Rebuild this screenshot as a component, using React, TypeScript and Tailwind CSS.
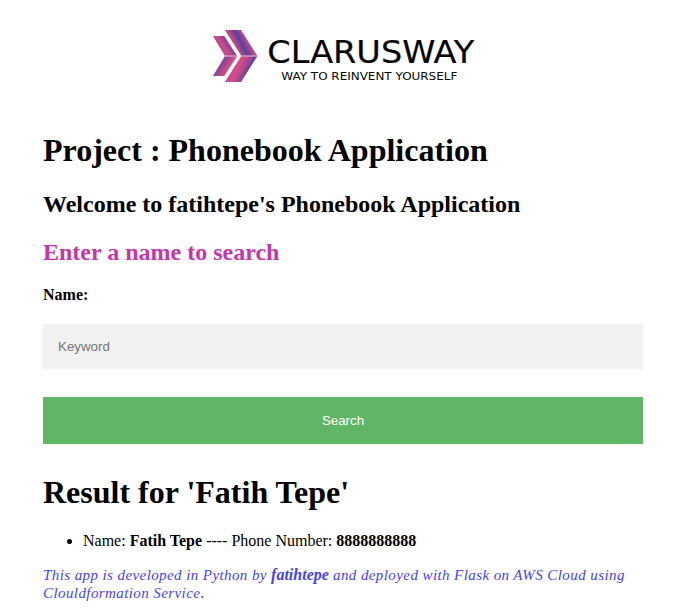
function Logo() {
  return (
    <svg className="block h-[60px] w-[280px]" viewBox="203 25 280 60" role="img" aria-label="Clarusway">
      <defs>
        <linearGradient id="smallTop" gradientUnits="userSpaceOnUse" x1="219" y1="51" x2="233" y2="42">
          <stop offset="0" stopColor="#8e4593" />
          <stop offset="0.35" stopColor="#cf4a89" />
          <stop offset="0.6" stopColor="#a0468f" />
          <stop offset="1" stopColor="#54419a" />
        </linearGradient>
        <linearGradient id="smallBottom" gradientUnits="userSpaceOnUse" x1="218" y1="61" x2="233" y2="70">
          <stop offset="0" stopColor="#5b439a" />
          <stop offset="0.4" stopColor="#a0478f" />
          <stop offset="0.75" stopColor="#dc4b88" />
          <stop offset="1" stopColor="#c84a8a" />
        </linearGradient>
        <linearGradient id="bigTop" gradientUnits="userSpaceOnUse" x1="231" y1="46" x2="250" y2="36">
          <stop offset="0" stopColor="#75449a" />
          <stop offset="0.2" stopColor="#c1498b" />
          <stop offset="0.5" stopColor="#59429a" />
          <stop offset="0.78" stopColor="#bd488c" />
          <stop offset="1" stopColor="#c9498a" />
        </linearGradient>
        <linearGradient id="bigBottom" gradientUnits="userSpaceOnUse" x1="231" y1="66" x2="250" y2="76">
          <stop offset="0" stopColor="#a3478f" />
          <stop offset="0.3" stopColor="#d94b88" />
          <stop offset="0.55" stopColor="#b4488d" />
          <stop offset="0.8" stopColor="#66439a" />
          <stop offset="1" stopColor="#45429c" />
        </linearGradient>
      </defs>
      <path d="M213 36h11.3L237.2 56H225z" fill="url(#smallTop)" />
      <path d="M225 56h12.2L224.3 76H213z" fill="url(#smallBottom)" />
      <path d="M225 30h16l16.5 26H241.3z" fill="url(#bigTop)" />
      <path d="M241.3 56h16.2L241 82h-16z" fill="url(#bigBottom)" />
      <path d="M225 56h12M241.3 56h15.7" stroke="#d391c0" strokeWidth="1.5" />
      <g className="font-['DejaVu_Sans',sans-serif]" fill="#050505">
        <text x="267.3" y="63" fontSize="32" textLength="207" lengthAdjust="spacingAndGlyphs" stroke="#050505" strokeWidth="0.2">CLARUSWAY</text>
        <text x="281.3" y="79.7" fontSize="11.3" textLength="176" lengthAdjust="spacingAndGlyphs">WAY TO REINVENT YOURSELF</text>
      </g>
    </svg>
  );
}

export default function App() {
  return (
    <main className="min-h-[615px] bg-white pr-[34px] pl-[43px] font-['Liberation_Serif',serif] text-base leading-[18px] text-black">
      <header className="flex h-[132px] justify-center pt-[25px]">
        <Logo />
      </header>
      <h1 className="text-[32px] leading-9 font-bold">Project : Phonebook Application</h1>
      <h2 className="mt-[22px] text-2xl leading-7 font-bold">Welcome to fatihtepe's Phonebook Application</h2>
      <form onSubmit={(e) => e.preventDefault()}>
        <h2 className="mt-5 text-2xl leading-7 font-bold text-[#c735ab]">Enter a name to search</h2>
        <label htmlFor="keyword" className="mt-5 block font-bold">Name:</label>
        <input
          id="keyword"
          placeholder="Keyword"
          className="mt-5 block h-[45px] w-full bg-[#f1f1f1] px-[15px] font-['Liberation_Sans',sans-serif] text-[13.333px] outline-none placeholder:text-[#757575]"
        />
        <button className="mt-7 block h-[47px] w-full bg-[#5fb765] font-['Liberation_Sans',sans-serif] text-[13.333px] text-white">
          Search
        </button>
      </form>
      <h1 className="mt-[30px] text-[32px] leading-9 font-bold">Result for 'Fatih Tepe'</h1>
      <ul className="mt-[22px] list-disc pl-10">
        <li>Name: <b>Fatih Tepe</b> ---- Phone Number: <b>8888888888</b></li>
      </ul>
      <p className="mt-4 text-[#473ff5]">
        <i className="text-[15px] tracking-[0.41px]">This app is developed in Python by </i>
        <b className="italic">fatihtepe</b>
        <i className="text-[15px] tracking-[0.41px]"> and deployed with Flask on AWS Cloud using Clouldformation Service</i>.
      </p>
    </main>
  );
}
